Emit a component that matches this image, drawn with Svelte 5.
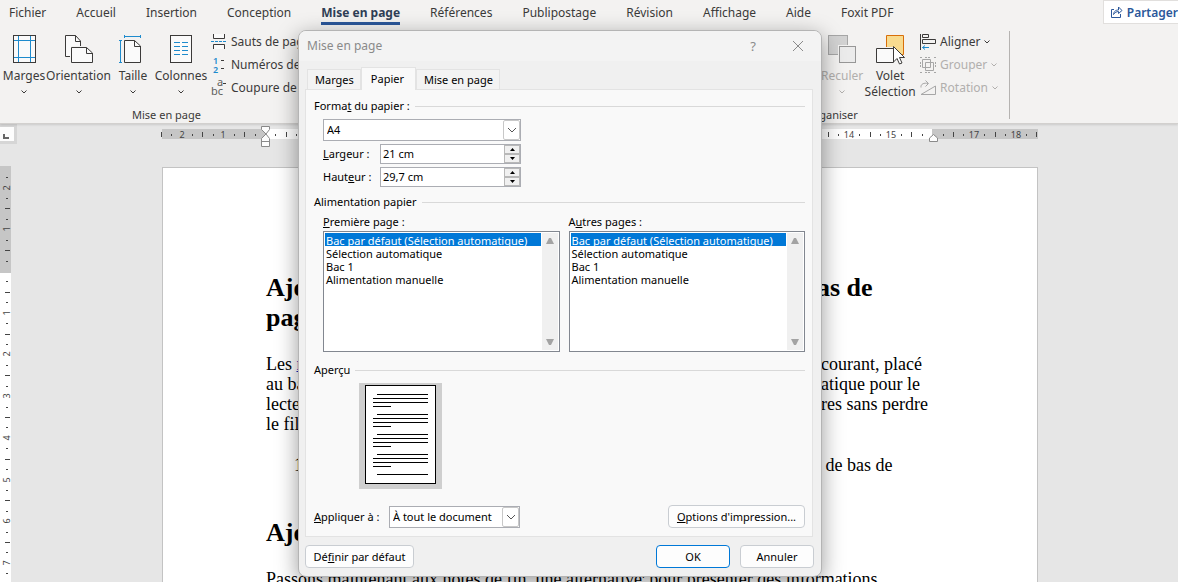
<script>
    const tabs = [
        "Fichier", "Accueil", "Insertion", "Conception", "Mise en page", "Références",
        "Publipostage", "Révision", "Affichage", "Aide", "Foxit PDF"
    ];
    const trays = [
        "Bac par défaut (Sélection automatique)",
        "Sélection automatique",
        "Bac 1",
        "Alimentation manuelle"
    ];
    const CM = 41.7; // un centimètre à l'écran

    // Graduations : chiffre au centimètre, trait au demi, point au quart
    function graduations(from, to) {
        let marks = [];
        for (let q = from * 4; q <= to * 4; q++) {
            let kind = q % 4 === 0 ? "number" : q % 2 === 0 ? "half" : "quarter";
            marks.push({ pos: Math.round((q / 4) * CM), kind, label: Math.abs(q / 4) });
        }
        return marks;
    }

    const horizontal = graduations(-2.5, 18.5);
    const vertical = graduations(-2.25, 7.25);
    const previewBlocks = [0, 20, 40, 60];

    let activeTab = "Mise en page";
    let format = "A4";
    let width = "21 cm";
    let height = "29,7 cm";
    let firstTray = trays[0];
    let otherTray = trays[0];
    let scope = "doc";
</script>

<div class="word">
    <header>
        <nav>
            {#each tabs as tab}
                <button class="tab" class:active={tab === activeTab} on:click={() => (activeTab = tab)}>{tab}</button>
            {/each}
            <button class="share">
                <svg width="13" height="12" viewBox="0 0 13 12"><path d="M4 3.5H1.5V11.500H10.500V8M3.500 8.500C4 5 6 4 8.500 4V1L12 4.500L8.500 7.500V5.500C6.500 5.500 5 6.500 3.500 8.500Z" fill="none" stroke="#2b579a" /></svg>
                Partager
            </button>
        </nav>

        <div class="ribbon">
            <section class="group setup">
                <div class="tools">
                    <button class="big">
                        <svg width="30" height="30" shape-rendering="crispEdges"><path d="M4.500 1.500H26.500V28.500H4.500Z" fill="#fafafa" stroke="#3b3a39" /><path d="M9.500 2V28M21.500 2V28M5 6.500H26M5 23.500H26" stroke="#1e8bcd" /></svg>
                        <span>Marges</span>
                        <svg class="chevron" width="6" height="4"><path d="M0.500 0.500L3 3L5.500 0.500" /></svg>
                    </button>
                    <button class="big wide">
                        <svg width="30" height="30"><path d="M6 22.500H1.500V1.500H11.500L16.500 7V12H7.500V22.500" fill="#fafafa" /><path d="M6 22.500H1.500V1.500H11.500L16.500 7V12M11.500 1.500V7.500H16.500" fill="none" stroke="#3b3a39" /><path d="M7.500 13.500H22.500L28.500 19V28.500H7.500Z" fill="#fafafa" stroke="#3b3a39" /><path d="M22.500 13.500V19.500H28.500" fill="none" stroke="#3b3a39" /></svg>
                        <span>Orientation</span>
                        <svg class="chevron" width="6" height="4"><path d="M0.500 0.500L3 3L5.500 0.500" /></svg>
                    </button>
                    <button class="big">
                        <svg width="30" height="30"><path d="M6.500 2.500H22.500M6.500 1V4M22.500 1V4M2.500 6.500V28.500M1 6.500H4M1 28.500H4" fill="none" stroke="#1e8bcd" /><path d="M6.500 6.500H16.500L22.500 12V28.500H6.500Z" fill="#fafafa" stroke="#3b3a39" /><path d="M16.500 6.500V12.500H22.500" fill="none" stroke="#3b3a39" /></svg>
                        <span>Taille</span>
                        <svg class="chevron" width="6" height="4"><path d="M0.500 0.500L3 3L5.500 0.500" /></svg>
                    </button>
                    <button class="big">
                        <svg width="30" height="30" shape-rendering="crispEdges"><path d="M4.500 1.500H25.500V28.500H4.500Z" fill="#fafafa" stroke="#3b3a39" /><path d="M8 8.500H14M16 8.500H22M8 12.500H14M16 12.500H22M8 16.500H14M16 16.500H22M8 20.500H14M16 20.500H22" stroke="#1e8bcd" /></svg>
                        <span>Colonnes</span>
                        <svg class="chevron" width="6" height="4"><path d="M0.500 0.500L3 3L5.500 0.500" /></svg>
                    </button>
                    <div class="stack">
                        <button class="small">
                            <svg width="16" height="16"><path d="M2.500 0V4.500H13.500V0M2.500 15V10.500H13.500V15" fill="#fafafa" stroke="#3b3a39" /><path d="M0 7.500H16" stroke="#1e8bcd" stroke-dasharray="3 1" /></svg>
                            Sauts de page
                        </button>
                        <button class="small">
                            <svg width="16" height="16" class="digits"><text x="2" y="7">1</text><text x="2" y="16">2</text><path d="M10 3.500H13M10 11.500H13" stroke="#3b3a39" /></svg>
                            Numéros de lignes
                        </button>
                        <button class="small">
                            <svg width="16" height="16" class="letters"><text x="6" y="6">a</text><text x="0" y="15">bc</text><path d="M12 3.500H15" stroke="#3b3a39" /></svg>
                            Coupure de mots
                        </button>
                    </div>
                </div>
                <h2>Mise en page</h2>
            </section>

            <section class="group arrange">
                <div class="tools">
                    <button class="big" disabled>
                        <svg width="30" height="30" shape-rendering="crispEdges"><path d="M1.500 1.500H20.500V20.500H1.500Z" fill="#d2d2d2" stroke="#a6a6a6" /><path d="M11 11H30V30H11Z" fill="#f3f2f1" /><path d="M12.500 12.500H28.500V28.500H12.500Z" fill="#ebebeb" stroke="#979797" /></svg>
                        <span>Reculer</span>
                        <svg class="chevron" width="6" height="4"><path d="M0.500 0.500L3 3L5.500 0.500" /></svg>
                    </button>
                    <button class="big">
                        <svg width="30" height="32"><path d="M11.500 1.500H28.500V20.500H11.500Z" fill="#f8db8f" stroke="#d86f0a" /><path d="M0 13H20V30H0Z" fill="#f3f2f1" /><path d="M1.500 14.500H18.500V28.500H1.500Z" fill="#fafafa" stroke="#3b3a39" /><path d="M18.500 12.500V28L22 24.500L24.500 30L27 29L24.500 23.500H29.500Z" fill="#fff" stroke="#3b3a39" /></svg>
                        <span class="two-lines">Volet<br />Sélection</span>
                    </button>
                    <div class="stack">
                        <button class="small">
                            <svg width="16" height="16"><path d="M0.500 0V16M2.500 0.500H8.500V3.500H2.500ZM2.500 5.500H15.500V9.500H2.500Z" fill="none" stroke="#3b3a39" /><path d="M2.500 13.500H9M5 11.500L2.500 13.500L5 15.500" fill="none" stroke="#1e8bcd" /></svg>
                            Aligner
                            <svg class="chevron" width="6" height="4"><path d="M0.500 0.500L3 3L5.500 0.500" /></svg>
                        </button>
                        <button class="small" disabled>
                            <svg width="16" height="16"><path d="M2.500 2.500H10.500V10.500H2.500ZM5.500 5.500H13.500V13.500H5.500Z" fill="none" stroke="#a6a6a6" /><path d="M0 0.500H2M14 0.500H16M0 15.500H2M14 15.500H16M5 0.500H11M5 15.500H11M0.500 5V11M15.500 5V11" stroke="#a6a6a6" stroke-dasharray="2 1" /></svg>
                            Grouper
                            <svg class="chevron" width="6" height="4"><path d="M0.500 0.500L3 3L5.500 0.500" /></svg>
                        </button>
                        <button class="small" disabled>
                            <svg width="16" height="16"><path d="M15.500 6V14.500H1Z" fill="none" stroke="#a6a6a6" /><path d="M1 7.500C0.500 4 4 2.500 8 3.500M5.500 0.500L8.500 3.500L5.500 6.500" fill="none" stroke="#a6a6a6" /></svg>
                            Rotation
                            <svg class="chevron" width="6" height="4"><path d="M0.500 0.500L3 3L5.500 0.500" /></svg>
                        </button>
                    </div>
                </div>
                <h2>Organiser</h2>
            </section>
        </div>
    </header>

    <main>
        <button class="tab-stop" aria-label="Taquet gauche">
            <svg width="6" height="5"><path d="M1 0V4H6" fill="none" stroke="#666" stroke-width="2" /></svg>
        </button>
        <div class="ruler-row">
            <svg class="ruler" width="876" height="10">
                <rect width="876" height="10" fill="#c6c6c6" />
                <rect x="104" width="666" height="10" fill="#fff" />
                <g transform="translate(103 0)">
                    {#each horizontal as mark}
                        {#if mark.kind === "half"}
                            <rect x={mark.pos} y="3" width="1" height="5" />
                        {:else if mark.kind === "quarter"}
                            <rect x={mark.pos} y="5" width="1" height="2" />
                        {:else if mark.label !== 0 && mark.label !== 16}
                            <text x={mark.pos} y="9">{mark.label}</text>
                        {/if}
                    {/each}
                </g>
                <path class="marker" d="M99.500 -2.500H107.500V0.500L104 5L107.500 9.500V17.500H99.500V9.500L104 5L99.500 0.500ZM99.500 12.500H107.500" />
                <path class="marker" d="M767.500 12.500V9L771.500 5.500L775.500 9V12.500Z" />
            </svg>
        </div>
        <div class="ruler-column">
            <svg class="ruler" width="11" height="416">
                <rect width="11" height="107" fill="#c6c6c6" />
                <rect y="107" width="11" height="309" fill="#fff" />
                <g transform="translate(0 105)">
                    {#each vertical as mark}
                        {#if mark.kind === "half"}
                            <rect x="5" y={mark.pos} width="5" height="1" />
                        {:else if mark.kind === "quarter"}
                            <rect x="6" y={mark.pos} width="2" height="1" />
                        {:else if mark.label !== 0}
                            <text transform="translate(10 {mark.pos}) rotate(-90)">{mark.label}</text>
                        {/if}
                    {/each}
                </g>
            </svg>
        </div>
        <div class="canvas">
            <article>
                <h1><span>Ajouter une note</span><span>as de</span><span>page</span></h1>
                <p class="split">
                    <span>Les <a href="#notes">notes de bas de page</a></span><span>courant, placé</span>
                    <span>au bas de la page</span><span>atique pour le</span>
                    <span>lecteur</span><span>res sans perdre</span>
                    <span>le fil</span>
                </p>
                <p class="split item"><span>1.</span><span>&nbsp;de bas de</span></p>
                <h1><span>Ajouter une note de fin</span></h1>
                <p>Passons maintenant aux notes de fin, une alternative<sup>:</sup> pour présenter des informations</p>
            </article>
        </div>
    </main>

    <form class="dialog" on:submit|preventDefault>
        <div class="titlebar">
            <span>Mise en page</span>
            <button type="button" aria-label="Aide" class="help">?</button>
            <button type="button" aria-label="Fermer"><svg width="12" height="12"><path d="M1 1L11 11M11 1L1 11" stroke="#8a8a8a" /></svg></button>
        </div>
        <div class="dialog-tabs">
            <button type="button">Marges</button>
            <button type="button" class="selected">Papier</button>
            <button type="button">Mise en page</button>
        </div>

        <div class="panel">
            <h3>Forma<u>t</u> du papier :</h3>
            <div class="paper">
                <div class="combo">
                    <select bind:value={format} aria-label="Format du papier"><option>A4</option></select>
                    <span class="drop"><svg width="10" height="6"><path d="M1 1L5 5L9 1" fill="none" stroke="#555" /></svg></span>
                </div>
                <div class="measure">
                    <label for="largeur"><u>L</u>argeur :</label>
                    <div class="spin">
                        <input id="largeur" bind:value={width} />
                        <div class="arrows">
                            <button type="button" aria-label="Augmenter la largeur"><svg width="5" height="3"><path d="M0 3L2.500 0L5 3Z" /></svg></button>
                            <button type="button" aria-label="Réduire la largeur"><svg width="5" height="3"><path d="M0 0L2.500 3L5 0Z" /></svg></button>
                        </div>
                    </div>
                </div>
                <div class="measure">
                    <label for="hauteur">Haut<u>e</u>ur :</label>
                    <div class="spin">
                        <input id="hauteur" bind:value={height} />
                        <div class="arrows">
                            <button type="button" aria-label="Augmenter la hauteur"><svg width="5" height="3"><path d="M0 3L2.500 0L5 3Z" /></svg></button>
                            <button type="button" aria-label="Réduire la hauteur"><svg width="5" height="3"><path d="M0 0L2.500 3L5 0Z" /></svg></button>
                        </div>
                    </div>
                </div>
            </div>

            <h3>Alimentation papier</h3>
            <div class="feeds">
                <div class="feed">
                    <label for="premiere"><u>P</u>remière page :</label>
                    <div class="listbox">
                        <select id="premiere" size="9" bind:value={firstTray}>
                            {#each trays as tray}<option value={tray}>{tray}</option>{/each}
                        </select>
                        <div class="scroll">
                            <svg width="8" height="6"><path d="M0 6L3 0H5L8 6Z" /></svg>
                            <svg width="8" height="6"><path d="M0 0L3 6H5L8 0Z" /></svg>
                        </div>
                    </div>
                </div>
                <div class="feed">
                    <label for="autres">A<u>u</u>tres pages :</label>
                    <div class="listbox">
                        <select id="autres" size="9" bind:value={otherTray}>
                            {#each trays as tray}<option value={tray}>{tray}</option>{/each}
                        </select>
                        <div class="scroll">
                            <svg width="8" height="6"><path d="M0 6L3 0H5L8 6Z" /></svg>
                            <svg width="8" height="6"><path d="M0 0L3 6H5L8 0Z" /></svg>
                        </div>
                    </div>
                </div>
            </div>

            <h3>Aperçu</h3>
            <svg class="preview" width="83" height="106" shape-rendering="crispEdges">
                <rect width="83" height="106" fill="#cfcfcf" />
                <rect x="6.500" y="2.500" width="70" height="98" fill="#fff" stroke="#000" />
                {#each previewBlocks as y}
                    <path d="M18 {y + 11.5}H69M14 {y + 15.5}H69M14 {y + 19.5}H69M14 {y + 23.5}H32" stroke="#000" />
                {/each}
                <path d="M18 91.500H69" stroke="#000" />
            </svg>

            <div class="apply">
                <label for="portee"><u>A</u>ppliquer à :</label>
                <div class="combo">
                    <select id="portee" bind:value={scope}><option value="doc">À tout le document</option></select>
                    <span class="drop"><svg width="10" height="6"><path d="M1 1L5 5L9 1" fill="none" stroke="#555" /></svg></span>
                </div>
                <button type="button" class="push print"><span><u>O</u>ptions d'impression...</span></button>
            </div>
        </div>

        <div class="footer">
            <button type="button" class="push default"><span>Dé<u>f</u>inir par défaut</span></button>
            <button type="submit" class="push ok">OK</button>
            <button type="button" class="push">Annuler</button>
        </div>
    </form>
</div>

<style>
    :global(body) {
        background: #e6e6e6;
    }

    .word {
        position: relative;
        display: flex;
        flex-direction: column;
        height: 100vh;
        overflow: hidden;
        font-family: "Noto Sans", "Open Sans", sans-serif;
        font-size: 12px;
        color: #3b3a39;
    }

    button, select, input {
        font: inherit;
        color: inherit;
        margin: 0;
        padding: 0;
        border: none;
        border-radius: 0;
        background: none;
        white-space: nowrap;
    }

    h1, h2, h3, p {
        margin: 0;
        font-weight: normal;
    }

    header {
        background: #f3f2f1;
        border-bottom: 1px solid #d2d0ce;
        box-shadow: 0 1px 2px rgba(0, 0, 0, 0.12);
        z-index: 1;
    }

    nav {
        display: flex;
        align-items: flex-start;
        gap: 30px;
        height: 28px;
        padding-left: 9px;
    }

    .tab {
        height: 25px;
        padding-top: 3px;
        border-bottom: 3px solid transparent;
        line-height: 19px;
    }

    .tab.active {
        font-weight: bold;
        color: #2f3e55;
        border-bottom-color: #2b579a;
    }

    .share {
        display: flex;
        align-items: center;
        gap: 4px;
        height: 24px;
        margin-left: auto;
        padding-left: 6px;
        background: #fff;
        border: 1px solid #e1dfdd;
        border-right: none;
        color: #2b579a;
        font-weight: 600;
    }

    .ribbon {
        display: flex;
        height: 95px;
    }

    .group {
        display: flex;
        flex-direction: column;
        justify-content: space-between;
        flex-shrink: 0;
        box-sizing: border-box;
    }

    .setup {
        width: 333px;
    }

    .arrange {
        width: 355px;
        margin-left: 322px;
        border-right: 1px solid #b5b3b1;
        margin-top: 3px;
        margin-bottom: 4px;
    }

    .tools {
        display: flex;
        padding-top: 6px;
    }

    .arrange .tools {
        justify-content: flex-end;
        padding-top: 3px;
        padding-right: 11px;
    }

    h2 {
        font-size: 11px;
        line-height: 16px;
        text-align: center;
    }

    .arrange h2 {
        margin-bottom: -4px;
    }

    .big {
        display: flex;
        flex-direction: column;
        flex-shrink: 0;
        align-items: center;
        width: 48px;
        line-height: 16px;
    }

    .big.wide {
        width: 61px;
    }

    .big span {
        margin-top: 4px;
    }

    .big .two-lines {
        margin-top: 2px;
    }

    .big .chevron {
        margin-top: 6px;
    }

    .chevron path {
        fill: none;
        stroke: currentColor;
    }

    button:disabled {
        color: #b1afad;
    }

    .stack {
        flex-shrink: 0;
        padding-left: 6px;
        margin-top: -4px;
    }

    .small {
        display: flex;
        align-items: center;
        gap: 4px;
        height: 23px;
    }

    .digits, .letters {
        overflow: visible;
    }

    .digits text {
        font-size: 9px;
        font-weight: 600;
        fill: #1e8bcd;
    }

    .letters text {
        font-size: 11px;
        fill: #605e5c;
    }

    main {
        flex: 1;
        display: grid;
        grid-template-columns: 12px 1fr;
        grid-template-rows: 42px 1fr;
        min-height: 0;
    }

    .tab-stop {
        display: flex;
        align-items: flex-end;
        width: 17px;
        height: 20px;
        padding: 0 0 2px 3px;
        box-sizing: border-box;
        background: #fdfdfd;
        border: 3px solid #d6d6d6;
        border-left: none;
    }

    .ruler-row {
        display: flex;
        justify-content: center;
        padding: 5px 0 0 10px;
    }

    .ruler {
        overflow: visible;
        fill: #444;
        font-size: 9px;
        text-anchor: middle;
    }

    .marker {
        fill: #fdfdfd;
        stroke: #8a8a8a;
    }

    .canvas {
        display: flex;
        justify-content: center;
        padding: 1px 0 0 10px;
        min-height: 0;
    }

    article {
        width: 876px;
        box-sizing: border-box;
        padding: 105px 0 0 103px;
        border: 1px solid #c3c3c3;
        background: #fff;
        color: #000;
        font-family: "Liberation Serif", "Times New Roman", serif;
        font-size: 18px;
        line-height: 20px;
        overflow: hidden;
    }

    h1, .split {
        display: grid;
        grid-template-columns: 555px 1fr;
    }

    h1 {
        grid-template-columns: 551px 1fr;
        font-size: 26px;
        font-weight: bold;
        line-height: 30px;
        margin-bottom: 21px;
    }

    article p {
        margin-bottom: 21px;
    }

    .item {
        padding-left: 28px;
        grid-template-columns: 527px 1fr;
    }

    .item + h1 {
        margin-top: 43px;
    }

    a {
        color: #1a1ab8;
    }

    sup {
        font-size: 10px;
        line-height: 0;
    }

    .dialog {
        position: absolute;
        z-index: 2;
        top: 30px;
        left: calc(50% - 291px);
        width: 522px;
        border: 1px solid #b4b4b4;
        border-radius: 8px;
        overflow: hidden;
        background: #f0f0f0;
        box-shadow: 0 6px 22px rgba(0, 0, 0, 0.4);
        color: #000;
        font-size: 11px;
        line-height: 14px;
    }

    .titlebar {
        display: flex;
        align-items: center;
        height: 30px;
        padding: 0 17px 0 8px;
        background: #f3f3f3;
        color: #8a8a8a;
        font-size: 12px;
    }

    .titlebar svg {
        display: block;
    }

    .help {
        margin-left: auto;
        margin-right: 36px;
        font-size: 13px;
    }

    .dialog-tabs {
        display: flex;
        align-items: flex-end;
        height: 28px;
        padding-left: 8px;
    }

    .dialog-tabs button {
        height: 20px;
        padding: 1px 6px 0 7px;
        background: #f3f3f3;
        border: 1px solid #e3e3e3;
        border-bottom: none;
    }

    .dialog-tabs .selected {
        height: 23px;
        padding: 0 11px 0 9px;
        margin-bottom: -1px;
        background: #f9f9f9;
        z-index: 1;
    }

    .panel {
        margin: 0 8px 0 6px;
        padding: 9px 7px 8px 8px;
        border: 1px solid #e3e3e3;
        background: #f9f9f9;
    }

    h3 {
        display: flex;
        align-items: center;
        font-size: 11px;
        line-height: 14px;
        white-space: pre;
    }

    h3::after {
        content: "";
        flex: 1;
        height: 1px;
        margin-left: 5px;
        background: #d9d9d9;
    }

    .paper {
        display: flex;
        flex-direction: column;
        gap: 3px;
        width: 198px;
        margin: 6px 0 8px 9px;
    }

    .combo {
        display: flex;
        box-sizing: border-box;
        height: 22px;
        border: 1px solid #abadb3;
        background: #fff;
    }

    .combo select {
        flex: 1;
        min-width: 0;
        padding-left: 3px;
        margin-right: -17px;
        appearance: none;
    }

    .drop {
        display: flex;
        align-items: center;
        justify-content: center;
        width: 15px;
        border: 1px solid #c8c8c8;
        border-radius: 2px;
        background: #fff;
        pointer-events: none;
    }

    .measure {
        display: flex;
        align-items: center;
    }

    .measure label {
        flex: none;
        width: 57px;
        white-space: nowrap;
    }

    .spin {
        display: flex;
        flex: 1;
        min-width: 0;
        box-sizing: border-box;
        height: 20px;
        border: 1px solid #abadb3;
        background: #fff;
    }

    .spin input {
        flex: 1;
        width: 0;
        min-width: 0;
        padding-left: 2px;
        outline: none;
    }

    .arrows {
        display: flex;
        flex-direction: column;
        width: 16px;
    }

    .arrows button {
        display: flex;
        flex: 1;
        align-items: center;
        justify-content: center;
        background: #f0f0f0;
        border: 1px solid #b8b8b8;
    }

    .feeds {
        display: grid;
        grid-template-columns: 1fr 1fr;
        gap: 9px;
        margin: 6px 0 11px 9px;
    }

    .feed label {
        display: block;
        margin-bottom: 2px;
    }

    .listbox {
        display: flex;
        box-sizing: border-box;
        height: 121px;
        padding: 1px;
        border: 1px solid #828790;
        background: #fff;
    }

    .listbox select {
        flex: 1;
        min-width: 0;
        overflow: hidden;
        outline: none;
    }

    .listbox option {
        box-sizing: border-box;
        min-height: 13px;
        height: 13px;
        padding: 0 1px;
        line-height: 11px;
    }

    .listbox option:checked {
        background: #0078d7 linear-gradient(#0078d7, #0078d7);
        color: #fff;
        -webkit-text-fill-color: #fff;
    }

    .scroll {
        display: flex;
        flex-direction: column;
        align-items: center;
        justify-content: space-between;
        width: 16px;
        margin-left: 1px;
        padding: 5px 0;
        box-sizing: border-box;
        background: #f0f0f0;
        fill: #a3a3a3;
    }

    .preview {
        display: block;
        margin: 6px 0 16px 45px;
    }

    .apply {
        display: flex;
        align-items: center;
    }

    .apply label {
        width: 75px;
    }

    .apply .combo {
        width: 131px;
    }

    .push {
        box-sizing: border-box;
        width: 74px;
        height: 23px;
        border: 1px solid #c9cdd2;
        border-radius: 4px;
        background: #fdfdfd;
    }

    .print {
        width: 137px;
        margin-left: auto;
    }

    .footer {
        display: flex;
        gap: 10px;
        padding: 8px 7px 8px 6px;
    }

    .default {
        width: 109px;
        margin-right: auto;
    }

    .ok {
        border-color: #0078d7;
    }
</style>
